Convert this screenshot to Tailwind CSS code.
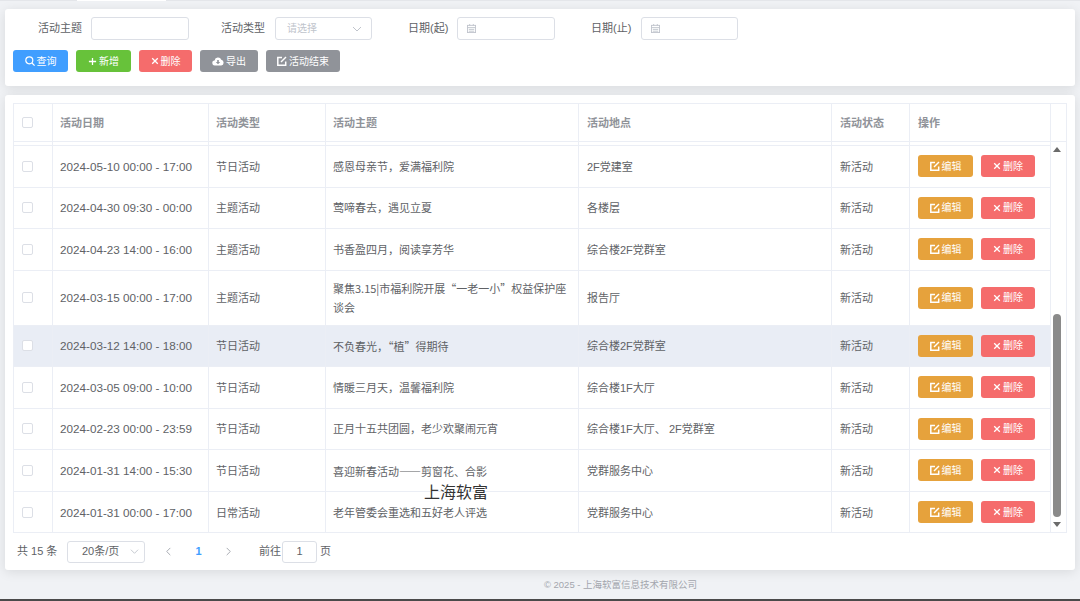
<!DOCTYPE html>
<html lang="zh-CN">
<head>
<meta charset="UTF-8">
<title>活动管理</title>
<script src="https://cdn.jsdelivr.net/npm/@tailwindcss/browser@4"></script>
</head>
<body class="relative h-[601px] w-[1080px] overflow-hidden bg-[#f0f2f5] font-['Liberation_Sans','Noto_Sans_CJK_SC',sans-serif] text-[11px] text-[#606266]">
<!-- tab strip -->
<div class="flex h-[1px] bg-[#e4e6ea] pl-[77px]"><div class="w-[89px] bg-white"></div></div>

<!-- search card -->
<section class="mx-[5px] mt-[8px] h-[77px] rounded-[3px] bg-white px-[8px] pt-[8px] shadow-[0_2px_12px_rgba(0,0,0,0.1)]">
  <div class="flex h-[23px] items-center">
    <label class="ml-[25px] w-[44px] whitespace-nowrap">活动主题</label>
    <div class="ml-[9px] h-[23px] w-[98px] rounded-[3px] border border-[#dcdfe6] bg-white"></div>
    <label class="ml-[32px] w-[44px] whitespace-nowrap">活动类型</label>
    <div class="ml-[10px] flex h-[23px] w-[97px] items-center justify-between rounded-[3px] border border-[#dcdfe6] bg-white pl-[11px] pr-[9px] text-[10px] text-[#c0c4cc]">
      <span>请选择</span>
      <svg class="h-[10px] w-[10px]" viewBox="0 0 10 10" fill="none" stroke="#c0c4cc" stroke-width="1"><path d="M1 3l4 4 4-4"/></svg>
    </div>
    <label class="ml-[36px] w-[40px] whitespace-nowrap">日期(起)</label>
    <div class="ml-[9px] flex h-[23px] w-[98px] items-center rounded-[3px] border border-[#dcdfe6] bg-white pl-[9px]">
      <svg class="h-[9px] w-[9px]" viewBox="0 0 10 10" fill="none" stroke="#c0c4cc" stroke-width="1"><rect x="0.5" y="1.5" width="9" height="8"/><path d="M0.5 4h9M2 6h6M2 8h6M3 0v2M7 0v2"/></svg>
    </div>
    <label class="ml-[36px] w-[40px] whitespace-nowrap">日期(止)</label>
    <div class="ml-[10px] flex h-[23px] w-[97px] items-center rounded-[3px] border border-[#dcdfe6] bg-white pl-[9px]">
      <svg class="h-[9px] w-[9px]" viewBox="0 0 10 10" fill="none" stroke="#c0c4cc" stroke-width="1"><rect x="0.5" y="1.5" width="9" height="8"/><path d="M0.5 4h9M2 6h6M2 8h6M3 0v2M7 0v2"/></svg>
    </div>
  </div>
  <div class="mt-[10px] flex h-[22px] gap-[8px] text-[10px] text-white">
    <button class="flex w-[55px] items-center justify-center gap-[2px] rounded-[3px] bg-[#409eff]">
      <svg class="h-[10px] w-[10px]" viewBox="0 0 10 10" fill="none" stroke="white" stroke-width="1.200"><circle cx="4.300" cy="4.300" r="3.500"/><path d="M7 7l2.600 2.600"/></svg>查询
    </button>
    <button class="flex w-[55px] items-center justify-center gap-[2px] rounded-[3px] bg-[#67c23a]">
      <svg class="h-[9px] w-[9px]" viewBox="0 0 10 10" fill="none" stroke="white" stroke-width="1.400"><path d="M5 1v8M1 5h8"/></svg>新增
    </button>
    <button class="flex w-[53px] items-center justify-center gap-[2px] rounded-[3px] bg-[#f56c6c]">
      <svg class="h-[8px] w-[8px]" viewBox="0 0 10 10" fill="none" stroke="white" stroke-width="1.600"><path d="M1.500 1.500l7 7M8.500 1.500l-7 7"/></svg>删除
    </button>
    <button class="flex w-[58px] items-center justify-center gap-[2px] rounded-[3px] bg-[#909399]">
      <svg class="h-[11px] w-[12px]" viewBox="0 0 12 10"><path fill="white" d="M3 9a2.500 2.500 0 0 1-.4-5A3.500 3.500 0 0 1 9.300 3.300 2.900 2.900 0 0 1 9.200 9z"/><path fill="#909399" d="M5.200 3.500h1.600v2h1.400L6 7.800 3.800 5.500h1.400z"/></svg>导出
    </button>
    <button class="flex w-[74px] items-center justify-center gap-[2px] rounded-[3px] bg-[#909399]">
      <svg class="h-[10px] w-[10px]" viewBox="0 0 10 10" fill="none" stroke="white" stroke-width="1.500"><path d="M8.700 5.500V9.200H.8V1.500h4.200"/><path d="M4 6l5-5"/></svg>活动结束
    </button>
  </div>
</section>

<!-- table card -->
<section class="relative mx-[5px] mt-[9px] h-[475px] rounded-[3px] bg-white px-[8px] pt-[8px] shadow-[0_2px_12px_rgba(0,0,0,0.1)]">
  <div class="h-[430px] overflow-hidden border border-[#ebeef5]">
    <!-- header -->
    <div class="grid h-[38px] grid-cols-[39px_156px_117px_253px_253px_78px_141px_1fr] items-stretch border-b border-[#ebeef5] font-bold text-[#909399]">
      <div class="flex items-center border-r border-[#ebeef5] pl-[8px]"><span class="h-[11px] w-[11px] rounded-[2px] border border-[#dcdfe6] bg-white"></span></div>
      <div class="flex items-center border-r border-[#ebeef5] px-[7px] pt-[1px]">活动日期</div>
      <div class="flex items-center border-r border-[#ebeef5] px-[7px] pt-[1px]">活动类型</div>
      <div class="flex items-center border-r border-[#ebeef5] px-[7px] pt-[1px]">活动主题</div>
      <div class="flex items-center border-r border-[#ebeef5] px-[8px] pt-[1px]">活动地点</div>
      <div class="flex items-center border-r border-[#ebeef5] px-[8px] pt-[1px]">活动状态</div>
      <div class="flex items-center border-r border-[#ebeef5] px-[8px] pt-[1px]">操作</div>
      <div></div>
    </div>
    <div class="flex">
      <div class="w-[1037px]">
        <div class="grid h-[4px] grid-cols-[39px_156px_117px_253px_253px_78px_141px] border-b border-[#ebeef5] [&>div]:border-r [&>div]:border-[#ebeef5]"><div></div><div></div><div></div><div></div><div></div><div></div><div></div></div>
        <!-- row -->
        <div class="grid h-[41.5px] grid-cols-[39px_156px_117px_253px_253px_78px_141px] border-b border-[#ebeef5]">
          <div class="flex items-center border-r border-[#ebeef5] pl-[8px]"><span class="h-[11px] w-[11px] rounded-[2px] border border-[#dcdfe6] bg-white"></span></div>
          <div class="flex items-center border-r border-[#ebeef5] px-[7px] pt-[1px] text-[11.7px] whitespace-nowrap">2024-05-10 00:00 - 17:00</div>
          <div class="flex items-center border-r border-[#ebeef5] px-[7px] pt-[1px]">节日活动</div>
          <div class="flex items-center border-r border-[#ebeef5] px-[7px] pt-[1px]">感恩母亲节，爱满福利院</div>
          <div class="flex items-center border-r border-[#ebeef5] px-[8px] pt-[1px]">2F党建室</div>
          <div class="flex items-center border-r border-[#ebeef5] px-[8px] pt-[1px]">新活动</div>
          <div class="flex items-center gap-[8px] border-r border-[#ebeef5] px-[8px] text-[10px] text-white">
            <button class="flex h-[22px] w-[55px] items-center justify-center gap-[2px] rounded-[3px] bg-[#e6a23c]"><svg class="h-[10px] w-[10px]" viewBox="0 0 10 10" fill="none" stroke="white" stroke-width="1.500"><path d="M8.700 5.500V9.200H.8V1.500h4.200"/><path d="M4 6l5-5"/></svg>编辑</button>
            <button class="flex h-[22px] w-[54px] items-center justify-center gap-[2px] rounded-[3px] bg-[#f56c6c]"><svg class="h-[8px] w-[8px]" viewBox="0 0 10 10" fill="none" stroke="white" stroke-width="1.600"><path d="M1.500 1.500l7 7M8.500 1.500l-7 7"/></svg>删除</button>
          </div>
        </div>
        <div class="grid h-[41.5px] grid-cols-[39px_156px_117px_253px_253px_78px_141px] border-b border-[#ebeef5]">
          <div class="flex items-center border-r border-[#ebeef5] pl-[8px]"><span class="h-[11px] w-[11px] rounded-[2px] border border-[#dcdfe6] bg-white"></span></div>
          <div class="flex items-center border-r border-[#ebeef5] px-[7px] pt-[1px] text-[11.7px] whitespace-nowrap">2024-04-30 09:30 - 00:00</div>
          <div class="flex items-center border-r border-[#ebeef5] px-[7px] pt-[1px]">主题活动</div>
          <div class="flex items-center border-r border-[#ebeef5] px-[7px] pt-[1px]">莺啼春去，遇见立夏</div>
          <div class="flex items-center border-r border-[#ebeef5] px-[8px] pt-[1px]">各楼层</div>
          <div class="flex items-center border-r border-[#ebeef5] px-[8px] pt-[1px]">新活动</div>
          <div class="flex items-center gap-[8px] border-r border-[#ebeef5] px-[8px] text-[10px] text-white">
            <button class="flex h-[22px] w-[55px] items-center justify-center gap-[2px] rounded-[3px] bg-[#e6a23c]"><svg class="h-[10px] w-[10px]" viewBox="0 0 10 10" fill="none" stroke="white" stroke-width="1.500"><path d="M8.700 5.500V9.200H.8V1.500h4.200"/><path d="M4 6l5-5"/></svg>编辑</button>
            <button class="flex h-[22px] w-[54px] items-center justify-center gap-[2px] rounded-[3px] bg-[#f56c6c]"><svg class="h-[8px] w-[8px]" viewBox="0 0 10 10" fill="none" stroke="white" stroke-width="1.600"><path d="M1.500 1.500l7 7M8.500 1.500l-7 7"/></svg>删除</button>
          </div>
        </div>
        <div class="grid h-[41.5px] grid-cols-[39px_156px_117px_253px_253px_78px_141px] border-b border-[#ebeef5]">
          <div class="flex items-center border-r border-[#ebeef5] pl-[8px]"><span class="h-[11px] w-[11px] rounded-[2px] border border-[#dcdfe6] bg-white"></span></div>
          <div class="flex items-center border-r border-[#ebeef5] px-[7px] pt-[1px] text-[11.7px] whitespace-nowrap">2024-04-23 14:00 - 16:00</div>
          <div class="flex items-center border-r border-[#ebeef5] px-[7px] pt-[1px]">主题活动</div>
          <div class="flex items-center border-r border-[#ebeef5] px-[7px] pt-[1px]">书香盈四月，阅读享芳华</div>
          <div class="flex items-center border-r border-[#ebeef5] px-[8px] pt-[1px]">综合楼2F党群室</div>
          <div class="flex items-center border-r border-[#ebeef5] px-[8px] pt-[1px]">新活动</div>
          <div class="flex items-center gap-[8px] border-r border-[#ebeef5] px-[8px] text-[10px] text-white">
            <button class="flex h-[22px] w-[55px] items-center justify-center gap-[2px] rounded-[3px] bg-[#e6a23c]"><svg class="h-[10px] w-[10px]" viewBox="0 0 10 10" fill="none" stroke="white" stroke-width="1.500"><path d="M8.700 5.500V9.200H.8V1.500h4.200"/><path d="M4 6l5-5"/></svg>编辑</button>
            <button class="flex h-[22px] w-[54px] items-center justify-center gap-[2px] rounded-[3px] bg-[#f56c6c]"><svg class="h-[8px] w-[8px]" viewBox="0 0 10 10" fill="none" stroke="white" stroke-width="1.600"><path d="M1.500 1.500l7 7M8.500 1.500l-7 7"/></svg>删除</button>
          </div>
        </div>
        <div class="grid h-[55px] grid-cols-[39px_156px_117px_253px_253px_78px_141px] border-b border-[#ebeef5]">
          <div class="flex items-center border-r border-[#ebeef5] pl-[8px]"><span class="h-[11px] w-[11px] rounded-[2px] border border-[#dcdfe6] bg-white"></span></div>
          <div class="flex items-center border-r border-[#ebeef5] px-[7px] pt-[1px] text-[11.7px] whitespace-nowrap">2024-03-15 00:00 - 17:00</div>
          <div class="flex items-center border-r border-[#ebeef5] px-[7px] pt-[1px]">主题活动</div>
          <div class="flex items-center border-r border-[#ebeef5] px-[7px] font-['Noto_Sans_CJK_SC',sans-serif] leading-[19px]">聚焦3.15|市福利院开展“一老一小”权益保护座谈会</div>
          <div class="flex items-center border-r border-[#ebeef5] px-[8px] pt-[1px]">报告厅</div>
          <div class="flex items-center border-r border-[#ebeef5] px-[8px] pt-[1px]">新活动</div>
          <div class="flex items-center gap-[8px] border-r border-[#ebeef5] px-[8px] text-[10px] text-white">
            <button class="flex h-[22px] w-[55px] items-center justify-center gap-[2px] rounded-[3px] bg-[#e6a23c]"><svg class="h-[10px] w-[10px]" viewBox="0 0 10 10" fill="none" stroke="white" stroke-width="1.500"><path d="M8.700 5.500V9.200H.8V1.500h4.200"/><path d="M4 6l5-5"/></svg>编辑</button>
            <button class="flex h-[22px] w-[54px] items-center justify-center gap-[2px] rounded-[3px] bg-[#f56c6c]"><svg class="h-[8px] w-[8px]" viewBox="0 0 10 10" fill="none" stroke="white" stroke-width="1.600"><path d="M1.500 1.500l7 7M8.500 1.500l-7 7"/></svg>删除</button>
          </div>
        </div>
        <div class="grid h-[41.5px] grid-cols-[39px_156px_117px_253px_253px_78px_141px] border-b border-[#ebeef5] bg-[#e9edf5]">
          <div class="flex items-center border-r border-[#ebeef5] pl-[8px]"><span class="h-[11px] w-[11px] rounded-[2px] border border-[#dcdfe6] bg-white"></span></div>
          <div class="flex items-center border-r border-[#ebeef5] px-[7px] pt-[1px] text-[11.7px] whitespace-nowrap">2024-03-12 14:00 - 18:00</div>
          <div class="flex items-center border-r border-[#ebeef5] px-[7px] pt-[1px]">节日活动</div>
          <div class="flex items-center border-r border-[#ebeef5] px-[7px] pt-[1px] font-['Noto_Sans_CJK_SC',sans-serif]">不负春光，“植”得期待</div>
          <div class="flex items-center border-r border-[#ebeef5] px-[8px] pt-[1px]">综合楼2F党群室</div>
          <div class="flex items-center border-r border-[#ebeef5] px-[8px] pt-[1px]">新活动</div>
          <div class="flex items-center gap-[8px] border-r border-[#ebeef5] px-[8px] text-[10px] text-white">
            <button class="flex h-[22px] w-[55px] items-center justify-center gap-[2px] rounded-[3px] bg-[#e6a23c]"><svg class="h-[10px] w-[10px]" viewBox="0 0 10 10" fill="none" stroke="white" stroke-width="1.500"><path d="M8.700 5.500V9.200H.8V1.500h4.200"/><path d="M4 6l5-5"/></svg>编辑</button>
            <button class="flex h-[22px] w-[54px] items-center justify-center gap-[2px] rounded-[3px] bg-[#f56c6c]"><svg class="h-[8px] w-[8px]" viewBox="0 0 10 10" fill="none" stroke="white" stroke-width="1.600"><path d="M1.500 1.500l7 7M8.500 1.500l-7 7"/></svg>删除</button>
          </div>
        </div>
        <div class="grid h-[41.5px] grid-cols-[39px_156px_117px_253px_253px_78px_141px] border-b border-[#ebeef5]">
          <div class="flex items-center border-r border-[#ebeef5] pl-[8px]"><span class="h-[11px] w-[11px] rounded-[2px] border border-[#dcdfe6] bg-white"></span></div>
          <div class="flex items-center border-r border-[#ebeef5] px-[7px] pt-[1px] text-[11.7px] whitespace-nowrap">2024-03-05 09:00 - 10:00</div>
          <div class="flex items-center border-r border-[#ebeef5] px-[7px] pt-[1px]">节日活动</div>
          <div class="flex items-center border-r border-[#ebeef5] px-[7px] pt-[1px]">情暖三月天，温馨福利院</div>
          <div class="flex items-center border-r border-[#ebeef5] px-[8px] pt-[1px]">综合楼1F大厅</div>
          <div class="flex items-center border-r border-[#ebeef5] px-[8px] pt-[1px]">新活动</div>
          <div class="flex items-center gap-[8px] border-r border-[#ebeef5] px-[8px] text-[10px] text-white">
            <button class="flex h-[22px] w-[55px] items-center justify-center gap-[2px] rounded-[3px] bg-[#e6a23c]"><svg class="h-[10px] w-[10px]" viewBox="0 0 10 10" fill="none" stroke="white" stroke-width="1.500"><path d="M8.700 5.500V9.200H.8V1.500h4.200"/><path d="M4 6l5-5"/></svg>编辑</button>
            <button class="flex h-[22px] w-[54px] items-center justify-center gap-[2px] rounded-[3px] bg-[#f56c6c]"><svg class="h-[8px] w-[8px]" viewBox="0 0 10 10" fill="none" stroke="white" stroke-width="1.600"><path d="M1.500 1.500l7 7M8.500 1.500l-7 7"/></svg>删除</button>
          </div>
        </div>
        <div class="grid h-[41.5px] grid-cols-[39px_156px_117px_253px_253px_78px_141px] border-b border-[#ebeef5]">
          <div class="flex items-center border-r border-[#ebeef5] pl-[8px]"><span class="h-[11px] w-[11px] rounded-[2px] border border-[#dcdfe6] bg-white"></span></div>
          <div class="flex items-center border-r border-[#ebeef5] px-[7px] pt-[1px] text-[11.7px] whitespace-nowrap">2024-02-23 00:00 - 23:59</div>
          <div class="flex items-center border-r border-[#ebeef5] px-[7px] pt-[1px]">节日活动</div>
          <div class="flex items-center border-r border-[#ebeef5] px-[7px] pt-[1px]">正月十五共团圆，老少欢聚闹元宵</div>
          <div class="flex items-center border-r border-[#ebeef5] px-[8px] pt-[1px]">综合楼1F大厅、 2F党群室</div>
          <div class="flex items-center border-r border-[#ebeef5] px-[8px] pt-[1px]">新活动</div>
          <div class="flex items-center gap-[8px] border-r border-[#ebeef5] px-[8px] text-[10px] text-white">
            <button class="flex h-[22px] w-[55px] items-center justify-center gap-[2px] rounded-[3px] bg-[#e6a23c]"><svg class="h-[10px] w-[10px]" viewBox="0 0 10 10" fill="none" stroke="white" stroke-width="1.500"><path d="M8.700 5.500V9.200H.8V1.500h4.200"/><path d="M4 6l5-5"/></svg>编辑</button>
            <button class="flex h-[22px] w-[54px] items-center justify-center gap-[2px] rounded-[3px] bg-[#f56c6c]"><svg class="h-[8px] w-[8px]" viewBox="0 0 10 10" fill="none" stroke="white" stroke-width="1.600"><path d="M1.500 1.500l7 7M8.500 1.500l-7 7"/></svg>删除</button>
          </div>
        </div>
        <div class="grid h-[41.5px] grid-cols-[39px_156px_117px_253px_253px_78px_141px] border-b border-[#ebeef5]">
          <div class="flex items-center border-r border-[#ebeef5] pl-[8px]"><span class="h-[11px] w-[11px] rounded-[2px] border border-[#dcdfe6] bg-white"></span></div>
          <div class="flex items-center border-r border-[#ebeef5] px-[7px] pt-[1px] text-[11.7px] whitespace-nowrap">2024-01-31 14:00 - 15:30</div>
          <div class="flex items-center border-r border-[#ebeef5] px-[7px] pt-[1px]">节日活动</div>
          <div class="flex items-center border-r border-[#ebeef5] px-[7px] pt-[1px] font-['Noto_Sans_CJK_SC',sans-serif]">喜迎新春活动——剪窗花、合影</div>
          <div class="flex items-center border-r border-[#ebeef5] px-[8px] pt-[1px]">党群服务中心</div>
          <div class="flex items-center border-r border-[#ebeef5] px-[8px] pt-[1px]">新活动</div>
          <div class="flex items-center gap-[8px] border-r border-[#ebeef5] px-[8px] text-[10px] text-white">
            <button class="flex h-[22px] w-[55px] items-center justify-center gap-[2px] rounded-[3px] bg-[#e6a23c]"><svg class="h-[10px] w-[10px]" viewBox="0 0 10 10" fill="none" stroke="white" stroke-width="1.500"><path d="M8.700 5.500V9.200H.8V1.500h4.200"/><path d="M4 6l5-5"/></svg>编辑</button>
            <button class="flex h-[22px] w-[54px] items-center justify-center gap-[2px] rounded-[3px] bg-[#f56c6c]"><svg class="h-[8px] w-[8px]" viewBox="0 0 10 10" fill="none" stroke="white" stroke-width="1.600"><path d="M1.500 1.500l7 7M8.500 1.500l-7 7"/></svg>删除</button>
          </div>
        </div>
        <div class="grid h-[41.5px] grid-cols-[39px_156px_117px_253px_253px_78px_141px]">
          <div class="flex items-center border-r border-[#ebeef5] pl-[8px]"><span class="h-[11px] w-[11px] rounded-[2px] border border-[#dcdfe6] bg-white"></span></div>
          <div class="flex items-center border-r border-[#ebeef5] px-[7px] pt-[1px] text-[11.7px] whitespace-nowrap">2024-01-31 00:00 - 17:00</div>
          <div class="flex items-center border-r border-[#ebeef5] px-[7px] pt-[1px]">日常活动</div>
          <div class="flex items-center border-r border-[#ebeef5] px-[7px] pt-[1px]">老年管委会重选和五好老人评选</div>
          <div class="flex items-center border-r border-[#ebeef5] px-[8px] pt-[1px]">党群服务中心</div>
          <div class="flex items-center border-r border-[#ebeef5] px-[8px] pt-[1px]">新活动</div>
          <div class="flex items-center gap-[8px] border-r border-[#ebeef5] px-[8px] text-[10px] text-white">
            <button class="flex h-[22px] w-[55px] items-center justify-center gap-[2px] rounded-[3px] bg-[#e6a23c]"><svg class="h-[10px] w-[10px]" viewBox="0 0 10 10" fill="none" stroke="white" stroke-width="1.500"><path d="M8.700 5.500V9.200H.8V1.500h4.200"/><path d="M4 6l5-5"/></svg>编辑</button>
            <button class="flex h-[22px] w-[54px] items-center justify-center gap-[2px] rounded-[3px] bg-[#f56c6c]"><svg class="h-[8px] w-[8px]" viewBox="0 0 10 10" fill="none" stroke="white" stroke-width="1.600"><path d="M1.500 1.500l7 7M8.500 1.500l-7 7"/></svg>删除</button>
          </div>
        </div>
      </div>
      <!-- scrollbar -->
      <div class="flex h-[391px] w-[12px] flex-col items-center">
        <svg class="mt-[5px] h-[5px] w-[8px] shrink-0" viewBox="0 0 8 5"><path fill="#6b6b6b" d="M4 0l4 5H0z"/></svg>
        <div class="mt-[162px] h-[203px] w-[8px] shrink-0 rounded-[4px] bg-[#8a8a8a]"></div>
        <svg class="mt-[5px] h-[5px] w-[8px] shrink-0" viewBox="0 0 8 5"><path fill="#6b6b6b" d="M0 0h8L4 5z"/></svg>
      </div>
    </div>
  </div>

  <!-- pagination -->
  <div class="flex h-[37px] items-center">
    <span class="ml-[4px] w-[39px] whitespace-nowrap">共 15 条</span>
    <div class="ml-[11px] flex h-[22px] w-[78px] items-center justify-between rounded-[3px] border border-[#dcdfe6] pl-[14px] pr-[5px]">
      <span>20条/页</span>
      <svg class="h-[9px] w-[9px]" viewBox="0 0 10 10" fill="none" stroke="#c0c4cc" stroke-width="1"><path d="M1 3l4 4 4-4"/></svg>
    </div>
    <svg class="ml-[19px] h-[9px] w-[9px]" viewBox="0 0 10 10" fill="none" stroke="#a8abb2" stroke-width="1.100"><path d="M7 1L3 5l4 4"/></svg>
    <span class="ml-[21px] w-[9px] text-center font-bold text-[#409eff]">1</span>
    <svg class="ml-[21px] h-[9px] w-[9px]" viewBox="0 0 10 10" fill="none" stroke="#a8abb2" stroke-width="1.100"><path d="M3 1l4 4-4 4"/></svg>
    <span class="ml-[26px] whitespace-nowrap">前往</span>
    <div class="ml-[1px] flex h-[22px] w-[35px] items-center justify-center rounded-[3px] border border-[#dcdfe6]">1</div>
    <span class="ml-[3px]">页</span>
  </div>
</section>

<footer class="mt-[8px] pl-[161px] text-center text-[9.5px] text-[#a3a6ad]">© 2025 - 上海软富信息技术有限公司</footer>

<!-- watermark and window edge -->
<div class="absolute left-[424px] top-[483px] text-[16px] leading-[20px] text-[#333]">上海软富</div>
<div class="absolute bottom-0 left-0 h-[2px] w-full bg-[#4a4a4a]"></div>
</body>
</html>
